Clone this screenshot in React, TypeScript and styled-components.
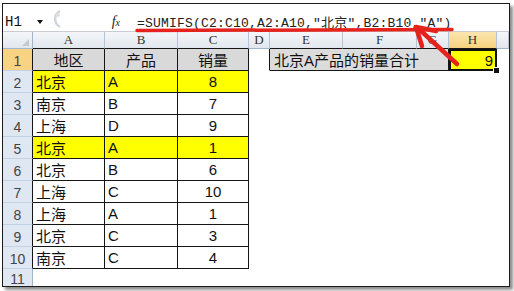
import styled, { createGlobalStyle } from "styled-components";

const GlobalStyle = createGlobalStyle`
  html, body {
    margin: 0;
    padding: 0;
    background: #fff;
  }
  body {
    font-family: "Liberation Sans", "Noto Sans CJK SC", sans-serif;
  }
`;

const COLS = ["A", "B", "C", "D", "E", "F", "G", "H"];

const rows: [string, string, string, boolean][] = [
  ["北京", "A", "8", true],
  ["南京", "B", "7", false],
  ["上海", "D", "9", false],
  ["北京", "A", "1", true],
  ["北京", "B", "6", false],
  ["上海", "C", "10", false],
  ["上海", "A", "1", false],
  ["北京", "C", "3", false],
  ["南京", "C", "4", false],
];

const INK = "#151515";
const HEAD_LINE = "#b6c3d5";

const App = () => {
  return (
    <Page>
      <GlobalStyle />
      <Frame>
        <FormulaBar>
          <NameBox>
            H1
            <Caret />
          </NameBox>
          <Grip>
            <svg width="16" height="20" viewBox="0 0 16 20">
              <path d="M13 2 A9 9 0 0 0 13 18" fill="none" stroke="#d2d6db" strokeWidth="2.5" />
              <circle cx="11" cy="6" r="2" fill="#dcdfe4" />
            </svg>
          </Grip>
          <FxBox>
            <Fx>
              f<small>x</small>
            </Fx>
          </FxBox>
          <Formula>=SUMIFS(C2:C10,A2:A10,"北京",B2:B10,"A")</Formula>
        </FormulaBar>

        <Sheet>
          <Corner />
          {COLS.map((c) => (
            <ColHead
              key={c}
              $active={c === "H"}
              $bottom={["A", "B", "C", "E", "F", "G", "H"].includes(c) ? INK : "#9eb6ce"}
            >
              {c}
            </ColHead>
          ))}
          <ColHead $bottom="#9eb6ce" />

          {/* row 1 */}
          <RowHead $active $right={INK}>1</RowHead>
          <Cell $bg="#d9d9d9" $right={INK} $bottom={INK} $align="center">地区</Cell>
          <Cell $bg="#d9d9d9" $right={INK} $bottom={INK} $align="center">产品</Cell>
          <Cell $bg="#d9d9d9" $right={INK} $bottom={INK} $align="center">销量</Cell>
          <Cell $right={INK} />
          <Cell $bg="#dcdcdc" $right={INK} $bottom={INK} $span={3} $wide>
            北京A产品的销量合计
          </Cell>
          <Selected>
            9
            <Handle />
          </Selected>
          <Cell />

          {rows.map(([city, prod, qty, hl], i) => (
            <Row key={i}>
              <RowHead $right={INK}>{i + 2}</RowHead>
              <Cell $bg={hl ? "#ffff00" : "#fff"} $right={INK} $bottom={INK}>{city}</Cell>
              <Cell $bg={hl ? "#ffff00" : "#fff"} $right={INK} $bottom={INK}>{prod}</Cell>
              <Cell $bg={hl ? "#ffff00" : "#fff"} $right={INK} $bottom={INK} $align="center">
                {qty}
              </Cell>
              <Cell $span={6} />
            </Row>
          ))}

          <RowHead $right="#9eb6ce">11</RowHead>
          <Cell $span={9} />
        </Sheet>
      </Frame>

      <Marks width="514" height="291" viewBox="0 0 514 291">
        <path d="M137 30.5 L452 29.5" stroke="#e6221c" strokeWidth="3.5" strokeLinecap="round" fill="none" />
        <path d="M457 64 L420 30" stroke="#e6221c" strokeWidth="4.5" strokeLinecap="round" fill="none" />
        <path
          d="M436 31 L416 27 L422 46"
          stroke="#e6221c"
          strokeWidth="4.5"
          strokeLinecap="round"
          strokeLinejoin="round"
          fill="none"
        />
      </Marks>
    </Page>
  );
};

const Page = styled.div`
  position: relative;
  width: 514px;
  height: 291px;
  overflow: hidden;
`;

const Frame = styled.div`
  box-sizing: border-box;
  margin: 3px 0 0 2px;
  width: 508px;
  height: 284px;
  border: 1px solid #1c1c1c;
  box-shadow: 3px 3px 3px rgba(0, 0, 0, 0.45);
  background: #fff;
  overflow: hidden;
  display: flex;
  flex-direction: column;
`;

const FormulaBar = styled.div`
  box-sizing: border-box;
  height: 28px;
  padding-top: 8px;
  display: flex;
  align-items: center;
  border-bottom: 1px solid #c9cdd3;
  background: #fff;
`;

const NameBox = styled.div`
  box-sizing: border-box;
  width: 44px;
  padding-left: 2px;
  display: flex;
  align-items: center;
  justify-content: space-between;
  padding-right: 4px;
  font-family: "Liberation Mono", monospace;
  font-size: 14px;
  color: #111;
`;

const Caret = styled.span`
  width: 0;
  height: 0;
  border-left: 3px solid transparent;
  border-right: 3px solid transparent;
  border-top: 4px solid #111;
`;

const Grip = styled.div`
  width: 16px;
  display: flex;
  align-items: center;
  margin-top: -6px;
`;

const FxBox = styled.div`
  width: 67px;
  display: flex;
  justify-content: flex-end;
  padding-right: 10px;
  box-sizing: border-box;
`;

const Fx = styled.span`
  font-family: "Liberation Serif", serif;
  font-style: italic;
  font-size: 14px;
  color: #222;

  small {
    font-size: 10px;
  }
`;

const Formula = styled.div`
  padding-left: 7px;
  font-family: "Liberation Mono", "Noto Sans CJK SC", monospace;
  font-size: 13px;
  letter-spacing: 0.2px;
  color: #222;
  white-space: nowrap;
`;

const Sheet = styled.div`
  flex: 1;
  display: grid;
  grid-template-columns: 30px 72px 73px 71px 21px 73px 74px 32px 48px 1fr;
  grid-template-rows: 17px repeat(10, 22px) 1fr;
`;

const Row = styled.div`
  display: contents;
`;

const Corner = styled.div`
  position: relative;
  box-sizing: border-box;
  background: linear-gradient(#f4f6f9, #e2e7ee);
  border-right: 1px solid #9eb6ce;
  border-bottom: 1px solid #9eb6ce;

  &::after {
    content: "";
    position: absolute;
    right: 3px;
    bottom: 2px;
    border-left: 7px solid transparent;
    border-bottom: 7px solid #c3c9d1;
  }
`;

const ColHead = styled.div<{ $active?: boolean; $bottom: string }>`
  box-sizing: border-box;
  display: flex;
  align-items: center;
  justify-content: center;
  font-family: "Liberation Serif", serif;
  font-size: 13px;
  color: #333;
  background: ${(p) =>
    p.$active ? "linear-gradient(#fbe6b0, #f6d27e)" : "linear-gradient(#f4f6f9, #e2e7ee)"};
  border-right: 1px solid ${HEAD_LINE};
  border-bottom: 1px solid ${(p) => p.$bottom};
`;

const RowHead = styled.div<{ $active?: boolean; $right: string }>`
  box-sizing: border-box;
  display: flex;
  align-items: center;
  justify-content: center;
  padding-top: 2px;
  font-family: "Liberation Sans", sans-serif;
  font-size: 14px;
  color: #444;
  background: ${(p) => (p.$active ? "#f7d383" : "#dfe7f3")};
  border-right: 1px solid ${(p) => p.$right};
  border-bottom: 1px solid #c4d1e2;
`;

const Cell = styled.div<{
  $bg?: string;
  $right?: string;
  $bottom?: string;
  $align?: "left" | "center";
  $span?: number;
  $wide?: boolean;
}>`
  box-sizing: border-box;
  display: flex;
  align-items: center;
  justify-content: ${(p) => (p.$align === "center" ? "center" : "flex-start")};
  padding-left: ${(p) => (p.$align === "center" ? 0 : p.$wide ? 4 : 3)}px;
  grid-column: span ${(p) => p.$span ?? 1};
  font-size: 15px;
  color: #111;
  white-space: nowrap;
  background: ${(p) => p.$bg ?? "#fff"};
  border-right: 1px solid ${(p) => p.$right ?? "transparent"};
  border-bottom: 1px solid ${(p) => p.$bottom ?? "transparent"};
`;

const Selected = styled.div`
  position: relative;
  box-sizing: border-box;
  display: flex;
  align-items: center;
  justify-content: flex-end;
  padding-right: 4px;
  font-size: 15px;
  color: #111;
  background: #ffff00;
  box-shadow: inset 0 0 0 2px #111;
`;

const Handle = styled.span`
  position: absolute;
  right: -3px;
  bottom: -3px;
  width: 5px;
  height: 5px;
  background: #111;
  border: 1px solid #fff;
`;

const Marks = styled.svg`
  position: absolute;
  left: 0;
  top: 0;
  pointer-events: none;
`;

export default App;
